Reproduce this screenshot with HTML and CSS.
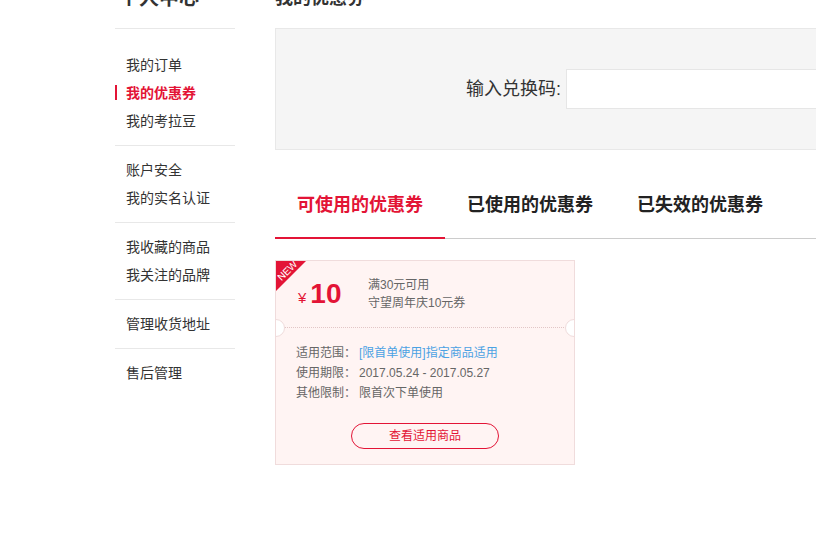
FILE: index.html
```html
<!DOCTYPE html>
<html lang="zh-CN">
<head>
<meta charset="utf-8">
<title>我的优惠券</title>
<link rel="stylesheet" href="styles.css">
</head>
<body>
<div class="page">
  <aside class="side">
    <div class="side-title">个人中心</div>
    <ul class="side-group first">
      <li>我的订单</li>
      <li class="active">我的优惠券</li>
      <li>我的考拉豆</li>
    </ul>
    <ul class="side-group">
      <li>账户安全</li>
      <li>我的实名认证</li>
    </ul>
    <ul class="side-group">
      <li>我收藏的商品</li>
      <li>我关注的品牌</li>
    </ul>
    <ul class="side-group">
      <li>管理收货地址</li>
    </ul>
    <ul class="side-group last">
      <li>售后管理</li>
    </ul>
  </aside>
  <main class="main">
    <div class="main-title">我的优惠券</div>
    <div class="redeem">
      <span class="redeem-label">输入兑换码:</span>
      <input class="redeem-input" type="text">
    </div>
    <div class="tabs">
      <div class="tab active">可使用的优惠券</div>
      <div class="tab">已使用的优惠券</div>
      <div class="tab">已失效的优惠券</div>
    </div>
    <div class="coupon">
      <div class="corner"><span>NEW</span></div>
      <div class="coupon-top">
        <div class="amount"><span class="yen">¥</span><span class="num">10</span></div>
        <div class="cond">
          <div>满30元可用</div>
          <div>守望周年庆10元券</div>
        </div>
      </div>
      <div class="coupon-sep"></div>
      <div class="coupon-body">
        <div class="row"><span class="k">适用范围：</span><span class="link">[限首单使用]指定商品适用</span></div>
        <div class="row"><span class="k">使用期限：</span><span>2017.05.24 - 2017.05.27</span></div>
        <div class="row"><span class="k">其他限制：</span><span>限首次下单使用</span></div>
        <div class="btn-wrap"><span class="btn">查看适用商品</span></div>
      </div>
    </div>
  </main>
</div>
</body>
</html>
```
FILE: styles.css
```css
html, body {
  margin: 0;
  padding: 0;
  overflow: hidden;
  background: #fff;
}
body {
  font-family: "Liberation Sans", "Noto Sans CJK SC", sans-serif;
  color: #333;
}
.page {
  display: flex;
  gap: 40px;
  margin-top: -17px;
  padding-left: 115px;
  width: 1200px;
}
.side {
  width: 120px;
  flex: none;
}
.side-title {
  font-size: 20px;
  font-weight: bold;
  line-height: 30px;
  padding-bottom: 15px;
  border-bottom: 1px solid #e8e8e8;
  padding-left: 4px;
}
.side-group {
  list-style: none;
  margin: 0;
  padding: 10px 0;
  border-bottom: 1px solid #e8e8e8;
}
.side-group.first { padding-top: 22px; }
.side-group.last { border-bottom: none; }
.side-group li {
  font-size: 14px;
  line-height: 28px;
  padding-left: 11px;
  color: #333;
  position: relative;
}
.side-group li.active {
  color: #e31436;
  font-weight: bold;
}
.side-group li.active::before {
  content: "";
  position: absolute;
  left: 0;
  top: 6px;
  width: 2px;
  height: 15px;
  background: #e31436;
}
.main {
  width: 900px;
  flex: none;
}
.main-title {
  font-size: 18px;
  font-weight: bold;
  line-height: 30px;
  margin-bottom: 15px;
}
.redeem {
  height: 120px;
  background: #f5f5f5;
  border: 1px solid #e8e8e8;
  display: flex;
  align-items: center;
  padding-left: 190px;
}
.redeem-label {
  font-size: 18px;
  color: #333;
  margin-right: 5px;
  padding-bottom: 5px;
}
.redeem-input {
  width: 400px;
  height: 38px;
  border: 1px solid #e6e6e6;
  background: #fff;
  padding: 0;
  margin: 0;
  outline: none;
}
.tabs {
  display: flex;
  margin-top: 20px;
  border-bottom: 1px solid #cccccc;
}
.tab {
  width: 170px;
  text-align: center;
  font-size: 18px;
  font-weight: bold;
  line-height: 24px;
  padding: 23px 0 20px;
  border-bottom: 2px solid transparent;
  margin-bottom: -1px;
  color: #222;
}
.tab.active {
  color: #e31436;
  border-bottom-color: #e31436;
}
.coupon {
  position: relative;
  margin-top: 21px;
  width: 298px;
  background: #fff4f3;
  border: 1px solid #f0dcdc;
  overflow: hidden;
}
.corner {
  position: absolute;
  left: 0;
  top: 0;
  width: 0;
  height: 0;
  border-top: 30px solid #e31436;
  border-right: 30px solid transparent;
}
.corner span {
  position: absolute;
  left: 0;
  top: -25px;
  font-size: 10px;
  line-height: 10px;
  color: #fff;
  transform: rotate(-45deg);
  font-family: "Liberation Sans", sans-serif;
}
.coupon-top {
  height: 66px;
  display: flex;
  align-items: center;
  padding-left: 22px;
}
.amount {
  width: 70px;
  color: #e31436;
  display: flex;
  align-items: baseline;
}
.yen {
  font-size: 15px;
  margin-right: 4px;
}
.num {
  font-size: 28px;
  font-weight: bold;
}
.cond {
  font-size: 12px;
  line-height: 18px;
  color: #666;
}
.coupon-sep {
  position: relative;
  height: 0;
  margin: 0 8px;
  border-top: 1px dotted #e2c6c6;
}
.coupon-sep::before,
.coupon-sep::after {
  content: "";
  position: absolute;
  top: -9px;
  width: 16px;
  height: 16px;
  border-radius: 50%;
  background: #fff;
  border: 1px solid #f0dcdc;
}
.coupon-sep::before { left: -17px; }
.coupon-sep::after { right: -17px; }
.coupon-body {
  padding: 15px 20px 15px;
  font-size: 12px;
  line-height: 20px;
  color: #666;
}
.row .k { margin-right: 3px; }
.link { color: #4ba2e3; }
.btn-wrap {
  margin-top: 20px;
  display: flex;
  justify-content: center;
}
.btn {
  width: 146px;
  height: 24px;
  line-height: 24px;
  text-align: center;
  border: 1px solid #e31436;
  border-radius: 13px;
  color: #e31436;
  font-size: 12px;
}
```
